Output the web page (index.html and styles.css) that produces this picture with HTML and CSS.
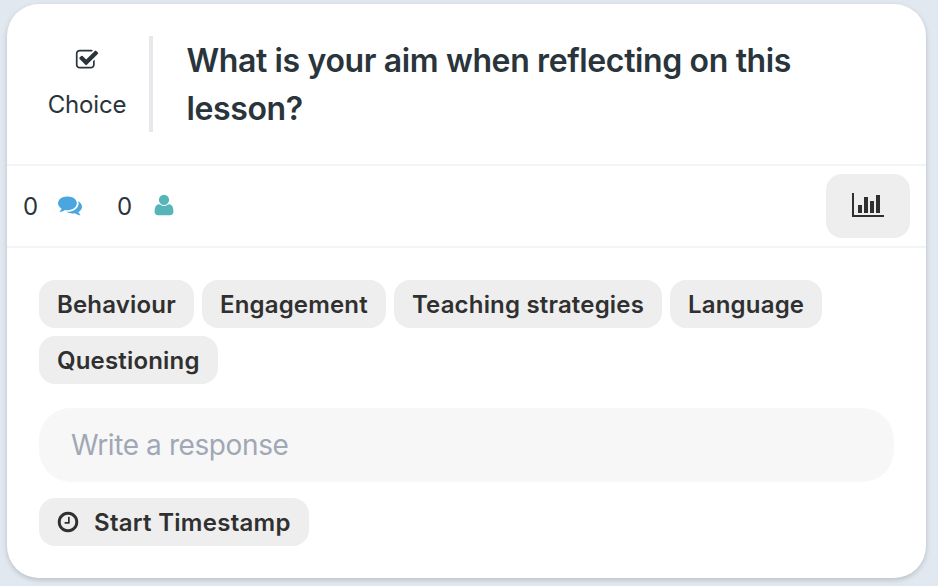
FILE: index.html
```html
<!DOCTYPE html>
<html lang="en">
<head>
<meta charset="utf-8">
<title>Reflection</title>
<link rel="stylesheet" href="styles.css">
</head>
<body>
<main class="card">
  <header class="question">
    <div class="kind">
      <svg class="icon" viewBox="0 0 1792 1792"><path d="M1472 930v318q0 119-84.5 203.5t-203.5 84.5h-832q-119 0-203.5-84.5t-84.5-203.5v-832q0-119 84.5-203.5t203.5-84.5h832q63 0 117 25 15 7 18 23 3 17-9 29l-49 49q-10 10-23 10-3 0-9-2-23-6-45-6h-832q-66 0-113 47t-47 113v832q0 66 47 113t113 47h832q66 0 113-47t47-113v-254q0-13 9-22l64-64q10-10 23-10 6 0 12 3 20 8 20 29zm231-489l-814 814q-24 24-57 24t-57-24l-430-430q-24-24-24-57t24-57l110-110q24-24 57-24t57 24l263 263 647-647q24-24 57-24t57 24l110 110q24 24 24 57t-24 57z"/></svg>
      <span class="kind-label">Choice</span>
    </div>
    <h1 class="title">What is your aim when reflecting on this lesson?</h1>
  </header>
  <section class="stats">
    <span class="count">0</span>
    <svg class="icon comments" viewBox="0 0 1792 1792"><path d="M1408 768q0 139-94 257t-256.5 186.5-353.5 68.5q-86 0-176-16-124 88-278 128-36 9-86 16h-3q-11 0-20.5-8t-11.5-21q-1-3-1-6.5t.5-6.5 2-6l2.5-5 3.5-5.5 4-5 4.5-5 4-4.5q5-6 23-25t26-29.5 22.5-29 25-38.5 20.5-44q-124-72-195-177t-71-224q0-139 94-257t256.5-186.5 353.5-68.5 353.5 68.5 256.5 186.5 94 257zm384 256q0 120-71 224.5t-195 176.5q10 24 20.5 44t25 38.5 22.5 29 26 29.5 23 25q1 1 4 4.5t4.5 5 4 5 3.5 5.5l2.5 5 2 6 .5 6.5-1 6.5q-3 14-13 22t-22 7q-50-7-86-16-154-40-278-128-90 16-176 16-271 0-472-132 58 4 88 4 161 0 309-45t264-129q125-92 192-212t67-254q0-77-23-152 129 71 204 178t75 230z"/></svg>
    <span class="count">0</span>
    <svg class="icon people" viewBox="0 0 1792 1792"><path d="M1600 1405q0 120-73 189.5t-194 69.5h-874q-121 0-194-69.5t-73-189.5q0-53 3.5-103.5t14-109 26.5-108.5 43-97.5 62-81 85.5-53.5 111.5-20q9 0 42 21.5t74.5 48 108 48 133.5 21.5 133.5-21.5 108-48 74.5-48 42-21.5q61 0 111.5 20t85.5 53.5 62 81 43 97.5 26.5 108.5 14 109 3.5 103.5zm-320-893q0 159-112.5 271.5t-271.5 112.5-271.5-112.5-112.5-271.5 112.5-271.5 271.5-112.5 271.5 112.5 112.5 271.5z"/></svg>
    <button class="chart-button" aria-label="Results">
      <svg class="chart" viewBox="0 128 2048 1536"><path d="M640 896v512h-256v-512h256zm384-512v1024h-256v-1024h256zm1024 1152v128h-2048v-1536h128v1408h1920zm-640-896v768h-256v-768h256zm384-384v1152h-256v-1152h256z"/></svg>
    </button>
  </section>
  <section class="answer">
    <div class="choices">
      <button class="pill">Behaviour</button>
      <button class="pill">Engagement</button>
      <button class="pill">Teaching strategies</button>
      <button class="pill">Language</button>
      <button class="pill">Questioning</button>
    </div>
    <input class="response" type="text" placeholder="Write a response">
    <button class="pill timestamp">
      <svg class="icon" viewBox="0 0 1792 1792"><path d="M1024 544v448q0 14-9 23t-23 9h-320q-14 0-23-9t-9-23v-64q0-14 9-23t23-9h224v-352q0-14 9-23t23-9h64q14 0 23 9t9 23zm416 352q0-148-73-273t-198-198-273-73-273 73-198 198-73 273 73 273 198 198 273 73 273-73 198-198 73-273zm224 0q0 209-103 385.5t-279.5 279.5-385.5 103-385.5-103-279.5-279.5-103-385.5 103-385.5 279.5-279.5 385.5-103 385.5 103 279.5 279.5 103 385.5z"/></svg>
      <span class="timestamp-label">Start Timestamp</span>
    </button>
  </section>
</main>
</body>
</html>
```
FILE: styles.css
```css
* {
  box-sizing: border-box;
}

body {
  margin: 0;
  padding: 4px 12px 8px 7px;
  height: 586px;
  overflow: hidden;
  background: #e2e8f0;
  color: #2a343b;
  font-family: Inter, "Liberation Sans", sans-serif;
}

button,
input {
  font-family: inherit;
  border: 0;
  margin: 0;
}

.card {
  height: 574px;
  background: #fff;
  border-radius: 32px;
  box-shadow: 0 2px 6px rgba(0, 0, 0, 0.1), 0 2px 4px rgba(0, 0, 0, 0.08);
}

.icon {
  display: block;
  flex: none;
  width: 24px;
  height: 24px;
  fill: currentColor;
}

.question {
  display: flex;
  height: 160px;
  padding: 32px 32px 32px 16px;
}

.kind {
  display: flex;
  flex-direction: column;
  align-items: center;
  width: 130px;
  height: 96px;
  padding: 11.5px 0 0 2px;
  border-right: 4px solid #e6e8eb;
}

.kind-label {
  margin-top: 15.5px;
  font-size: 24px;
  line-height: 36px;
  letter-spacing: -0.15px;
}

.title {
  flex: 1;
  margin: 0 0 0 33.5px;
  padding: 1px 60px 0 0;
  font-size: 32px;
  line-height: 48px;
  font-weight: 600;
  letter-spacing: -0.37px;
}

.stats {
  display: flex;
  align-items: center;
  height: 84px;
  padding: 0 16px;
  border: solid #f1f5f9;
  border-width: 2px 0;
}

.count {
  width: 16px;
  padding-top: 2px;
  font-size: 24px;
  line-height: 36px;
}

.comments {
  margin: 0 35.5px 2px 18.5px;
  color: #4ba5de;
}

.people {
  margin: 0 0 2px 18.5px;
  color: #55b5b9;
}

.chart-button {
  display: flex;
  align-items: center;
  justify-content: center;
  width: 84px;
  height: 64px;
  margin-left: auto;
  padding: 0 0 2px;
  background: #eee;
  border-radius: 16px;
}

.chart {
  width: 32px;
  height: 24px;
  fill: #303030;
}

.answer {
  padding: 32px;
}

.choices {
  display: flex;
  flex-wrap: wrap;
  gap: 8px;
}

.pill {
  height: 48px;
  padding: 2px 18px 0;
  background: #eee;
  border-radius: 16px;
  color: #303030;
  font-size: 24px;
  line-height: 36px;
  font-weight: 600;
  letter-spacing: 0.18px;
  white-space: nowrap;
}

.response {
  display: block;
  width: 855px;
  height: 74px;
  margin: 24px 0 16px;
  padding: 1px 32px;
  background: #f7f7f7;
  border-radius: 32px;
  font-size: 28px;
  letter-spacing: -0.4px;
}

.response::placeholder {
  color: #a0a7b5;
  opacity: 1;
}

.timestamp {
  display: flex;
  align-items: center;
  gap: 14px;
  padding: 0 18px 0 17px;
  letter-spacing: 0.28px;
}

.timestamp-label {
  padding-top: 2px;
}
```
